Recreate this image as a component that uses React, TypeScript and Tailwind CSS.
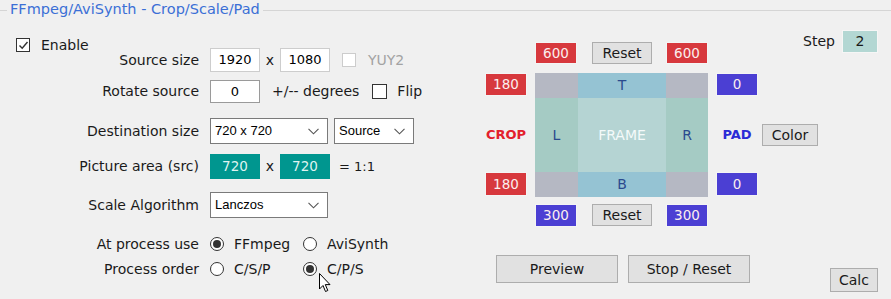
import React from "react";

const label = "font-['DejaVu_Sans',sans-serif] text-[14px] text-[#1a1a1a]";

const Check = ({ checked, disabled, size = 14 }: { checked?: boolean; disabled?: boolean; size?: number }) => (
  <div
    className={`flex items-center justify-center bg-white border ${disabled ? "border-[#cccccc]" : "border-[#333333]"}`}
    style={{ width: size, height: size }}
  >
    {checked && (
      <svg width="11" height="11" viewBox="0 0 11 11">
        <path d="M1.5 5.5 L4.2 8.3 L9.5 2" fill="none" stroke="#333" strokeWidth="1.4" />
      </svg>
    )}
  </div>
);

const Radio = ({ on, text }: { on?: boolean; text: string }) => (
  <div className="flex items-center w-[93px]">
    <div className="w-[14px] h-[14px] rounded-full border border-[#333] bg-white flex items-center justify-center">
      {on && <div className="w-[8px] h-[8px] rounded-full bg-[#333]" />}
    </div>
    <span className={`${label} ml-[10px]`}>{text}</span>
  </div>
);

const Select = ({ value, w }: { value: string; w: string }) => (
  <div className={`${w} h-full bg-white border border-[#7a7a7a] flex items-center pl-[4px] pr-[8px]`}>
    <span className="font-['Liberation_Sans',sans-serif] text-[13px] text-black flex-1">{value}</span>
    <svg width="11" height="7" viewBox="0 0 11 7">
      <path d="M0.5 0.8 L5.5 5.8 L10.5 0.8" fill="none" stroke="#555" strokeWidth="1.1" />
    </svg>
  </div>
);

const Box = ({ v, c, h = "h-[23px]" }: { v: string; c: string; h?: string }) => (
  <div className={`w-[42px] ${h} ${c} border border-[#f4f4f4] flex items-center justify-center font-['DejaVu_Sans',sans-serif] text-[13.5px] text-[#fbeeee]`}>
    {v}
  </div>
);

const Btn = ({ t, w, h }: { t: string; w: string; h: string }) => (
  <div className={`${w} ${h} bg-[#e1e1e1] border border-[#adadad] flex items-center justify-center ${label}`}>{t}</div>
);

const Row = ({ name, cls, children }: { name: string; cls: string; children?: React.ReactNode }) => (
  <div className={`flex items-center ${cls}`}>
    <div className={`w-[199px] text-right ${label}`}>{name}</div>
    <div className="ml-[11px] flex items-center h-full">{children}</div>
  </div>
);

export default function App() {
  const red = "bg-[#d7383d]";
  const blue = "bg-[#4b3fd3]";
  return (
    <div className="relative w-[891px] h-[299px] bg-[#f0f0f0] overflow-hidden">
      {/* group header */}
      <div className="flex items-center h-[20px]">
        <div className="w-[7px] h-px bg-[#d5d5d5]" />
        <span className="px-[3px] font-['DejaVu_Sans',sans-serif] text-[14.5px] text-[#3b6fd6]">FFmpeg/AviSynth - Crop/Scale/Pad</span>
        <div className="flex-1 h-px bg-[#d5d5d5]" />
      </div>

      <div className="flex">
        {/* left */}
        <div className="w-[470px] flex flex-col">
          <div className="mt-[16px] h-[18px] flex items-center pl-[16px]">
            <Check checked size={14} />
            <span className={`${label} ml-[11px]`}>Enable</span>
          </div>
          <Row name="Source size" cls="-mt-[6px] h-[24px]">
            <div className="w-[50px] h-[24px] bg-white border border-[#cdcdcd] flex items-center justify-center font-['DejaVu_Sans',sans-serif] text-[13px]">1920</div>
            <span className={`${label} w-[20px] text-center`}>x</span>
            <div className="w-[50px] h-[24px] bg-white border border-[#cdcdcd] flex items-center justify-center font-['DejaVu_Sans',sans-serif] text-[13px]">1080</div>
            <div className="ml-[12px]"><Check disabled /></div>
            <span className="ml-[12px] font-['DejaVu_Sans',sans-serif] text-[14px] text-[#a3a3a3]">YUY2</span>
          </Row>
          <Row name="Rotate source" cls="mt-[8px] h-[23px]">
            <div className="w-[50px] h-[23px] bg-white border border-[#9a9a9a] flex items-center justify-center font-['DejaVu_Sans',sans-serif] text-[13px]">0</div>
            <span className={`${label} ml-[12px]`}>+/-- degrees</span>
            <div className="ml-[13px]"><Check size={15} /></div>
            <span className={`${label} ml-[10px]`}>Flip</span>
          </Row>
          <Row name="Destination size" cls="mt-[15px] h-[26px]">
            <Select value="720 x 720" w="w-[118px]" />
            <div className="ml-[6px] h-full"><Select value="Source" w="w-[80px]" /></div>
          </Row>
          <Row name="Picture area (src)" cls="mt-[10px] h-[25px]">
            <div className="w-[50px] h-[25px] bg-[#00968f] flex items-center justify-center font-['DejaVu_Sans',sans-serif] text-[13.5px] text-[#dff3f1]">720</div>
            <span className={`${label} w-[20px] text-center`}>x</span>
            <div className="w-[50px] h-[25px] bg-[#00968f] flex items-center justify-center font-['DejaVu_Sans',sans-serif] text-[13.5px] text-[#dff3f1]">720</div>
            <span className="ml-[9px] font-['DejaVu_Sans',sans-serif] text-[13px] text-[#1a1a1a]">= 1:1</span>
          </Row>
          <Row name="Scale Algorithm" cls="mt-[13px] h-[26px]">
            <Select value="Lanczos" w="w-[118px]" />
          </Row>
          <Row name="At process use" cls="mt-[18px] h-[16px]">
            <Radio on text="FFmpeg" />
            <Radio text="AviSynth" />
          </Row>
          <Row name="Process order" cls="mt-[9px] h-[16px]">
            <Radio text="C/S/P" />
            <Radio on text="C/P/S" />
          </Row>
        </div>

        {/* right */}
        <div className="flex-1 pl-[15px] pr-[13px] flex flex-col">
          <div className="mt-[22px] h-[22px] flex items-start">
            <div className="ml-[50px]"><Box v="600" c={red} h="h-[22px]" /></div>
            <div className="ml-[15px]"><Btn t="Reset" w="w-[60px]" h="h-[22px]" /></div>
            <div className="ml-[14px]"><Box v="600" c={red} h="h-[22px]" /></div>
            <div className="ml-auto -mt-[12px] flex items-center">
              <span className={label}>Step</span>
              <div className="ml-[7px] w-[36px] h-[23px] bg-[#b3d7d3] border border-[#f6f6f6] flex items-center justify-center font-['DejaVu_Sans',sans-serif] text-[14px] text-[#1a1a1a]">2</div>
            </div>
          </div>

          <div className="mt-[9px] grid grid-cols-[42px_8px_43px_88px_42px_8px_42px_4px_56px] grid-rows-[25px_74px_25px]">
            <div className="col-start-1 row-start-1"><Box v="180" c={red} /></div>
            <div className="col-start-1 row-start-2 flex items-center justify-center font-['DejaVu_Sans',sans-serif] text-[13px] font-bold text-[#e3202b]">CROP</div>
            <div className="col-start-1 row-start-3"><Box v="180" c={red} h="h-[24px]" /></div>

            <div className="col-start-3 row-start-1 bg-[#b5b8c3]" />
            <div className="col-start-4 row-start-1 bg-[#95c3d3] flex items-center justify-center font-['DejaVu_Sans',sans-serif] text-[14px] text-[#2b4a8e]">T</div>
            <div className="col-start-5 row-start-1 bg-[#b5b8c3]" />
            <div className="col-start-3 row-start-2 bg-[#a5cbc4] flex items-center justify-center font-['DejaVu_Sans',sans-serif] text-[14px] text-[#2b4a8e]">L</div>
            <div className="col-start-4 row-start-2 bg-[#b5d4d3] flex items-center justify-center font-['DejaVu_Sans',sans-serif] text-[14px] text-[#f4fafa]">FRAME</div>
            <div className="col-start-5 row-start-2 bg-[#a5cbc4] flex items-center justify-center font-['DejaVu_Sans',sans-serif] text-[14px] text-[#2b4a8e]">R</div>
            <div className="col-start-3 row-start-3 bg-[#b5b8c3]" />
            <div className="col-start-4 row-start-3 bg-[#95c3d3] flex items-center justify-center font-['DejaVu_Sans',sans-serif] text-[14px] text-[#2b4a8e]">B</div>
            <div className="col-start-5 row-start-3 bg-[#b5b8c3]" />

            <div className="col-start-7 row-start-1"><Box v="0" c={blue} /></div>
            <div className="col-start-7 row-start-2 flex items-center justify-center font-['DejaVu_Sans',sans-serif] text-[13px] font-bold text-[#2b2bd6]">PAD</div>
            <div className="col-start-7 row-start-3"><Box v="0" c={blue} h="h-[24px]" /></div>
            <div className="col-start-9 row-start-2 flex items-center"><Btn t="Color" w="w-[56px]" h="h-[22px]" /></div>
          </div>

          <div className="mt-[7px] h-[23px] flex items-start">
            <div className="ml-[50px]"><Box v="300" c={blue} /></div>
            <div className="ml-[15px]"><Btn t="Reset" w="w-[60px]" h="h-[22px]" /></div>
            <div className="ml-[14px]"><Box v="300" c={blue} /></div>
          </div>

          <div className="mt-[28px] flex items-start">
            <div className="ml-[11px]"><Btn t="Preview" w="w-[122px]" h="h-[28px]" /></div>
            <div className="ml-[10px]"><Btn t="Stop / Reset" w="w-[122px]" h="h-[28px]" /></div>
            <div className="ml-auto mt-[13px]"><Btn t="Calc" w="w-[48px]" h="h-[24px]" /></div>
          </div>
        </div>
      </div>

      {/* mouse pointer */}
      <svg className="absolute left-[319px] top-[273px]" width="13" height="20" viewBox="0 0 13 20">
        <path d="M0.5 0.5 L0.5 16 L4 12.5 L6.5 18.5 L8.8 17.5 L6.3 11.6 L11 11.6 Z" fill="#fff" stroke="#000" strokeWidth="1" />
      </svg>
    </div>
  );
}
